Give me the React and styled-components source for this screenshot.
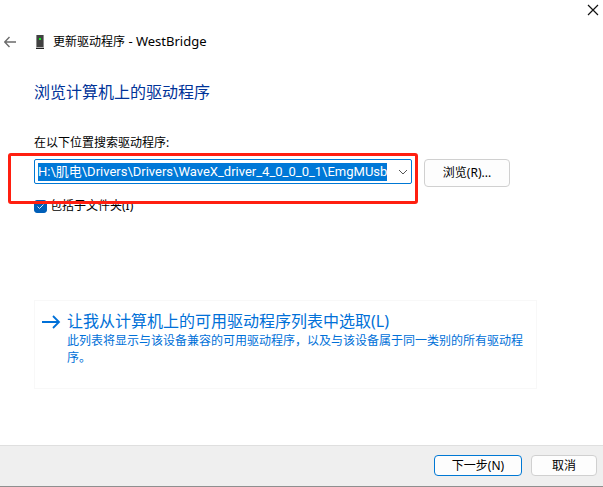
import React, { useEffect, useRef, useState } from "react";
import styled, { createGlobalStyle } from "styled-components";

const GlobalStyle = createGlobalStyle`
  * {
    box-sizing: border-box;
  }

  body {
    margin: 0;
    background: #fff;
    color: #000;
    font: 12px/18px "Noto Sans", "Noto Sans CJK SC", sans-serif;
  }

  button,
  input {
    font: inherit;
    color: inherit;
  }
`;

const Dialog = styled.div`
  min-height: 100vh;
  display: flex;
  flex-direction: column;
  border-bottom: 1px solid #8f8f8f;
`;

const TitleBar = styled.div`
  display: flex;
  justify-content: flex-end;
  padding: 4px 4px 0 0;
`;

const IconButton = styled.button`
  display: flex;
  padding: 0;
  border: 0;
  background: none;
  color: ${(props) => props.$color};
`;

const Header = styled.header`
  display: flex;
  align-items: center;
  padding: 16px 4px 0;
`;

const DeviceIcon = styled.svg`
  margin: 0 8px 0 19px;
`;

const Title = styled.h1`
  margin: 0;
  font-size: 12px;
  font-weight: 400;
`;

const DeviceName = styled.span`
  font-size: 13px;
`;

const Main = styled.main`
  flex: 1;
  padding: 29px 66px 0 34px;
`;

const Heading = styled.h2`
  margin: 0;
  color: #003399;
  font-size: 16px;
  font-weight: 400;
  line-height: 24px;
`;

const FieldLabel = styled.label`
  display: block;
  margin-top: 30px;
`;

const FieldRow = styled.div`
  display: flex;
  align-items: flex-start;
  gap: 12px;
  padding: 7px 27px 0 0;
`;

const ComboBox = styled.div`
  position: relative;
  flex: 1;
  height: 25px;
  display: flex;
  align-items: center;
  padding: 0 3px;
  border: 1px solid #0078d4;
  border-radius: 2px;
`;

const PathInput = styled.input`
  flex: 1;
  min-width: 0;
  height: 18px;
  padding: 0;
  border: 0;
  outline: 0;
  background: none;
  font-family: Roboto, "Noto Sans CJK SC", sans-serif;
  font-size: 13px;

  &::selection {
    background: #0078d7;
    color: #fff;
  }
`;

const Highlight = styled.div`
  position: absolute;
  inset: -7px -7px -21px -27px;
  border: 3px solid #ff1f10;
  border-radius: 3px;
  pointer-events: none;
  z-index: 1;
`;

const Button = styled.button`
  min-width: ${(props) => props.$width};
  height: ${(props) => props.$height};
  padding: 0 8px;
  border: 1px solid ${(props) => (props.$primary ? "#0078d4" : "#d0d0d0")};
  border-radius: 4px;
  background: #fdfdfd;
  line-height: 18px;
`;

const CheckRow = styled.label`
  display: flex;
  align-items: center;
  gap: 3px;
  margin-top: 10px;
`;

const CheckMark = styled.span`
  display: grid;
  color: #d6e8f8;

  > * {
    grid-area: 1 / 1;
  }

  svg {
    z-index: 0;
    pointer-events: none;
  }
`;

const CheckBox = styled.input`
  appearance: none;
  width: 13px;
  height: 13px;
  margin: 0;
  border: 1px solid #005fb8;
  border-radius: 3px;

  &:checked {
    background: #005fb8;
  }
`;

const CommandLink = styled.button`
  width: 100%;
  min-height: 89px;
  display: flex;
  align-items: flex-start;
  gap: 6px;
  margin-top: 85px;
  padding: 9px 6px;
  border: 1px solid #f8f8f8;
  background: #fff;
  color: #0070d8;
  text-align: left;
`;

const CommandArrow = styled.svg`
  flex: none;
  margin-top: 5px;
`;

const CommandTitle = styled.span`
  display: block;
  font-size: 16px;
  line-height: 22px;
`;

const CommandText = styled.span`
  display: block;
  line-height: 17px;
`;

const Footer = styled.footer`
  display: flex;
  justify-content: flex-end;
  gap: 9px;
  padding: 9px 6px 10px;
  border-top: 1px solid #dfdfdf;
  background: #efefef;
`;

export default function App() {
  const [path, setPath] = useState(
    "H:\\肌电\\Drivers\\Drivers\\WaveX_driver_4_0_0_0_1\\EmgMUsb"
  );
  const [subfolders, setSubfolders] = useState(true);
  const pathRef = useRef(null);

  useEffect(() => {
    pathRef.current.focus();
    pathRef.current.select();
  }, []);

  return (
    <Dialog>
      <GlobalStyle />
      <TitleBar>
        <IconButton $color="#111" aria-label="关闭">
          <svg width="12" height="12" viewBox="0 0 12 12">
            <path d="M1 1l10 10M11 1L1 11" stroke="currentColor" strokeWidth="1.2" />
          </svg>
        </IconButton>
      </TitleBar>
      <Header>
        <IconButton $color="#6b6b6b" aria-label="返回">
          <svg width="12" height="12" viewBox="0 0 12 12" fill="none">
            <path d="M5.5 1L.7 6l4.8 5M.7 6H12" stroke="currentColor" strokeWidth="1.4" />
          </svg>
        </IconButton>
        <DeviceIcon width="10" height="16" viewBox="0 0 10 16">
          <path d="M2 1h6v12H2z" fill="#414141" />
          <path d="M1 1h1v12H1zM8 1h1v12H8z" fill="#8b8b8b" />
          <path d="M1 13h8v1H1z" fill="#b5b5b5" />
          <path d="M1 14h8v1H1z" fill="#222" />
          <path d="M4 4h2v2H4z" fill="#10f020" />
        </DeviceIcon>
        <Title>
          更新驱动程序<DeviceName> - WestBridge</DeviceName>
        </Title>
      </Header>
      <Main>
        <Heading>浏览计算机上的驱动程序</Heading>
        <FieldLabel htmlFor="path">在以下位置搜索驱动程序:</FieldLabel>
        <FieldRow>
          <ComboBox>
            <PathInput
              id="path"
              ref={pathRef}
              value={path}
              spellCheck={false}
              onChange={(e) => setPath(e.target.value)}
            />
            <IconButton $color="#555" aria-label="展开">
              <svg width="10" height="10" viewBox="0 0 10 10" fill="none">
                <path d="M1 3l4 4 4-4" stroke="currentColor" />
              </svg>
            </IconButton>
            <Highlight />
          </ComboBox>
          <Button $width="86px" $height="28px">
            浏览(R)...
          </Button>
        </FieldRow>
        <CheckRow>
          <CheckMark>
            <CheckBox
              type="checkbox"
              checked={subfolders}
              onChange={(e) => setSubfolders(e.target.checked)}
            />
            {subfolders && (
              <svg width="13" height="13" viewBox="0 0 13 13" fill="none">
                <path d="M3.5 6.5l2 2 4-4" stroke="currentColor" />
              </svg>
            )}
          </CheckMark>
          包括子文件夹(I)
        </CheckRow>
        <CommandLink>
          <CommandArrow width="20" height="14" viewBox="0 0 20 14" fill="none">
            <path d="M1 7h17M12 1l6 6-6 6" stroke="currentColor" strokeWidth="1.8" />
          </CommandArrow>
          <span>
            <CommandTitle>让我从计算机上的可用驱动程序列表中选取(L)</CommandTitle>
            <CommandText>
              此列表将显示与该设备兼容的可用驱动程序，以及与该设备属于同一类别的所有驱动程序。
            </CommandText>
          </span>
        </CommandLink>
      </Main>
      <Footer>
        <Button $primary $width="88px" $height="21px">
          下一步(N)
        </Button>
        <Button $width="66px" $height="21px">
          取消
        </Button>
      </Footer>
    </Dialog>
  );
}
